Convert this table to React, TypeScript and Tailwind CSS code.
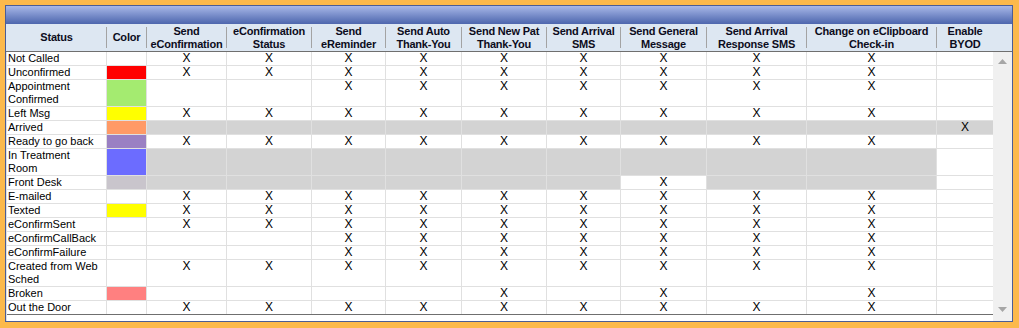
type Row = {
  name: string[];
  color?: string;
  tall?: boolean;
  marks: string; // X = mark, . = blank, g = grey (disabled), G = grey with mark
};

const columns = [
  { label: ['Send', 'eConfirmation'], w: 'w-[80px]' },
  { label: ['eConfirmation', 'Status'], w: 'w-[85px]' },
  { label: ['Send', 'eReminder'], w: 'w-[74px]' },
  { label: ['Send Auto', 'Thank-You'], w: 'w-[76px]' },
  { label: ['Send New Pat', 'Thank-You'], w: 'w-[85px]' },
  { label: ['Send Arrival', 'SMS'], w: 'w-[74px]' },
  { label: ['Send General', 'Message'], w: 'w-[86px]' },
  { label: ['Send Arrival', 'Response SMS'], w: 'w-[100px]' },
  { label: ['Change on eClipboard', 'Check-in'], w: 'w-[130px]' },
  { label: ['Enable', 'BYOD'], w: 'w-[56px]' },
];

const rows: Row[] = [
  { name: ['Not Called'], marks: 'XXXXXXXXX.' },
  { name: ['Unconfirmed'], color: 'bg-[#ff0000]', marks: 'XXXXXXXXX.' },
  { name: ['Appointment', 'Confirmed'], color: 'bg-[#a4eb70]', tall: true, marks: '..XXXXXXX.' },
  { name: ['Left Msg'], color: 'bg-[#ffff00]', marks: 'XXXXXXXXX.' },
  { name: ['Arrived'], color: 'bg-[#ff9a66]', marks: 'gggggggggG' },
  { name: ['Ready to go back'], color: 'bg-[#9a80c3]', marks: 'XXXXXXXXX.' },
  { name: ['In Treatment', 'Room'], color: 'bg-[#6c6cff]', tall: true, marks: 'ggggggggg.' },
  { name: ['Front Desk'], color: 'bg-[#c9c5cc]', marks: 'ggggggXgg.' },
  { name: ['E-mailed'], marks: 'XXXXXXXXX.' },
  { name: ['Texted'], color: 'bg-[#ffff00]', marks: 'XXXXXXXXX.' },
  { name: ['eConfirmSent'], marks: 'XXXXXXXXX.' },
  { name: ['eConfirmCallBack'], marks: '..XXXXXXX.' },
  { name: ['eConfirmFailure'], marks: '..XXXXXXX.' },
  { name: ['Created from Web', 'Sched'], tall: true, marks: 'XXXXXXXXX.' },
  { name: ['Broken'], color: 'bg-[#ff8080]', marks: '....X.X.X.' },
  { name: ['Out the Door'], marks: 'XXXXXXXXX.' },
];

function HeaderCell({ label, w, sep = true }: { label: string[]; w: string; sep?: boolean }) {
  return (
    <div className={`${w} flex shrink-0 items-stretch py-[3px]`}>
      <div className="flex flex-1 flex-col items-center justify-center leading-[13px] tracking-[-0.2px]">
        {label.map((l) => (
          <span key={l} className="whitespace-nowrap">{l}</span>
        ))}
      </div>
      {sep && <div className="w-px bg-[#a3a3a3]" />}
    </div>
  );
}

function Arrow({ up }: { up?: boolean }) {
  return (
    <svg width="9" height="5" viewBox="0 0 9 5">
      <path d={up ? 'M0 5 L4.5 0 L9 5 Z' : 'M0 0 L4.5 5 L9 0 Z'} fill="#a6a6a6" />
    </svg>
  );
}

export default function App() {
  return (
    <div className="w-[1019px] h-[328px] bg-[#fcb94c] pt-[5px] pl-[5px] pr-[6px] pb-[6px] font-['Liberation_Sans',Arial,sans-serif] text-[11px] text-black">
      <div className="flex h-full flex-col border border-[#4b5d96] bg-white">
        {/* title bar */}
        <div className="h-[18px] shrink-0 bg-linear-to-b from-[#a9b8e8] to-[#4d66ad]" />

        {/* column headers */}
        <div className="flex h-[28px] shrink-0 border-b border-[#6f6f6f] bg-[#dde7f2] font-bold text-[#0c0c20]">
          <div className="w-px shrink-0" />
          <HeaderCell label={['Status']} w="w-[100px]" />
          <HeaderCell label={['Color']} w="w-[40px]" />
          {columns.map((c, i) => (
            <HeaderCell key={c.label.join(' ')} label={c.label} w={c.w} sep={i < columns.length - 1} />
          ))}
        </div>

        <div className="flex flex-1">
          <div className="flex w-[987px] flex-col border-l border-[#e0e0e0]">
            {rows.map((r, ri) => (
              <div
                key={r.name.join(' ')}
                className={`flex ${r.tall ? 'h-[27px]' : 'h-[14px]'} border-b ${ri === rows.length - 1 ? 'border-[#6f6f6f]' : 'border-[#e0e0e0]'} leading-[13px]`}
              >
                <div className="w-[100px] shrink-0 border-r border-[#e0e0e0] pl-px">
                  {r.name.map((n) => (
                    <div key={n} className="whitespace-nowrap">{n}</div>
                  ))}
                </div>
                <div className={`w-[40px] shrink-0 border-r border-[#e0e0e0] ${r.color ?? ''}`} />
                {columns.map((c, ci) => {
                  const m = r.marks[ci];
                  const grey = m === 'g' || m === 'G';
                  return (
                    <div
                      key={ci}
                      className={`${c.w} shrink-0 text-center text-[12px] ${ci < columns.length - 1 ? 'border-r' : ''} border-[#e0e0e0] ${grey ? 'bg-[#d3d3d3]' : ''}`}
                    >
                      {m === 'X' || m === 'G' ? 'X' : ''}
                    </div>
                  );
                })}
              </div>
            ))}
          </div>

          {/* scrollbar */}
          <div className="flex w-[19px] flex-col items-center justify-between bg-[#f0f0f0] pt-[7px] pb-[9px]">
            <Arrow up />
            <Arrow />
          </div>
        </div>
      </div>
    </div>
  );
}
